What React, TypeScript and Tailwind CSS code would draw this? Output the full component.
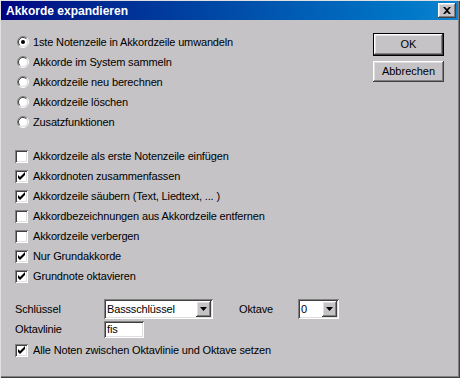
import React from "react";

const raised =
  "shadow-[inset_-1px_-1px_#404040,inset_1px_1px_#ffffff,inset_-2px_-2px_#808080,inset_2px_2px_#dfdfdf]";
const sunken =
  "shadow-[inset_1px_1px_#808080,inset_-1px_-1px_#ffffff,inset_2px_2px_#404040,inset_-2px_-2px_#dfdfdf]";

const Radio = ({ checked, label }: { checked?: boolean; label: string }) => (
  <div className="flex items-center h-[20px]">
    <svg width="12" height="12" viewBox="0 0 12 12" className="ml-[2px] shrink-0">
      <circle cx="6" cy="6" r="4.5" fill="#ffffff" />
      <path d="M2.1 9.9 A5.5 5.5 0 0 1 9.9 2.1" stroke="#808080" strokeWidth="1" fill="none" />
      <path d="M9.9 2.1 A5.5 5.5 0 0 1 2.1 9.9" stroke="#ffffff" strokeWidth="1" fill="none" />
      <path d="M2.8 9.2 A4.5 4.5 0 0 1 9.2 2.8" stroke="#404040" strokeWidth="1" fill="none" />
      <path d="M9.2 2.8 A4.5 4.5 0 0 1 2.8 9.2" stroke="#dfdfdf" strokeWidth="1" fill="none" />
      {checked && <circle cx="6" cy="6" r="2" fill="#000000" />}
    </svg>
    <span className="ml-[4px]">{label}</span>
  </div>
);

const Check = ({ checked, label }: { checked?: boolean; label: string }) => (
  <div className="flex items-center h-[20px]">
    <div className={`w-[13px] h-[13px] bg-white shrink-0 relative ${sunken}`}>
      {checked && (
        <svg width="13" height="13" viewBox="0 0 13 13" className="absolute left-0 top-0">
          <path d="M3 5 L5 7 L10 2 L10 5 L5 10 L3 8 Z" fill="#000000" />
        </svg>
      )}
    </div>
    <span className="ml-[5px]">{label}</span>
  </div>
);

const Combo = ({ value, className }: { value: string; className: string }) => (
  <div className={`h-[20px] bg-white flex items-center justify-between pl-[3px] pr-[2px] ${sunken} ${className}`}>
    <span>{value}</span>
    <div className={`w-[15px] h-[16px] bg-[#c5c3c6] flex items-center justify-center ${raised}`}>
      <svg width="7" height="4" viewBox="0 0 7 4">
        <path d="M0 0 H7 L3.5 4 Z" fill="#000000" />
      </svg>
    </div>
  </div>
);

export default function App() {
  return (
    <div className="w-[460px] h-[378px] bg-[#c5c3c6] pt-[1px] pl-[1px] pr-[2px] pb-[2px] shadow-[inset_1px_1px_#dfdfdf,inset_-1px_-1px_#404040,inset_-2px_-2px_#808080] font-['Liberation_Sans',Arial,sans-serif] text-[11px] tracking-[-0.15px] text-black flex flex-col">
      <div className="h-[19px] bg-gradient-to-r from-[#000080] to-[#1084d0] flex items-center justify-between pl-[5px]">
        <span className="text-white font-bold text-[12px] tracking-normal">Akkorde expandieren</span>
        <div className={`w-[18px] h-[15px] mr-[2px] bg-[#c5c3c6] flex items-center justify-center ${raised}`}>
          <svg width="8" height="7" viewBox="0 0 8 7">
            <path d="M0 0 H2 L4 2 L6 0 H8 L5 3.5 L8 7 H6 L4 5 L2 7 H0 L3 3.5 Z" fill="#000000" />
          </svg>
        </div>
      </div>

      <div className="flex flex-col pl-[14px] pt-[12px]">
        <div className="flex justify-between">
          <div className="flex flex-col">
            <Radio checked label="1ste Notenzeile in Akkordzeile umwandeln" />
            <Radio label="Akkorde im System sammeln" />
            <Radio label="Akkordzeile neu berechnen" />
            <Radio label="Akkordzeile löschen" />
            <Radio label="Zusatzfunktionen" />

            <div className="mt-[14px] flex flex-col">
              <Check label="Akkordzeile als erste Notenzeile einfügen" />
              <Check checked label="Akkordnoten zusammenfassen" />
              <Check checked label="Akkordzeile säubern (Text, Liedtext, ... )" />
              <Check label="Akkordbezeichnungen aus Akkordzeile entfernen" />
              <Check label="Akkordzeile verbergen" />
              <Check checked label="Nur Grundakkorde" />
              <Check checked label="Grundnote oktavieren" />
            </div>
          </div>

          <div className="flex flex-col mt-[1px] mr-[14px] w-[71px] tracking-normal">
            <button className="h-[23px] border border-black bg-[#c5c3c6] shadow-[inset_-1px_-1px_#404040,inset_1px_1px_#ffffff,inset_-2px_-2px_#808080,inset_2px_2px_#dfdfdf]">
              OK
            </button>
            <button className={`h-[21px] mt-[5px] bg-[#c5c3c6] ${raised}`}>Abbrechen</button>
          </div>
        </div>

        <div className="mt-[13px] flex flex-col">
          <div className="flex items-center h-[20px]">
            <span className="w-[89px]">Schlüssel</span>
            <Combo value="Bassschlüssel" className="w-[109px]" />
            <span className="ml-[26px] w-[59px]">Oktave</span>
            <Combo value="0" className="w-[41px]" />
          </div>
          <div className="flex items-center h-[17px] mt-[2px]">
            <span className="w-[89px]">Oktavlinie</span>
            <div className={`w-[40px] h-[17px] bg-white flex items-center pl-[3px] ${sunken}`}>fis</div>
          </div>
          <div className="mt-[2px]">
            <Check checked label="Alle Noten zwischen Oktavlinie und Oktave setzen" />
          </div>
        </div>
      </div>
    </div>
  );
}
